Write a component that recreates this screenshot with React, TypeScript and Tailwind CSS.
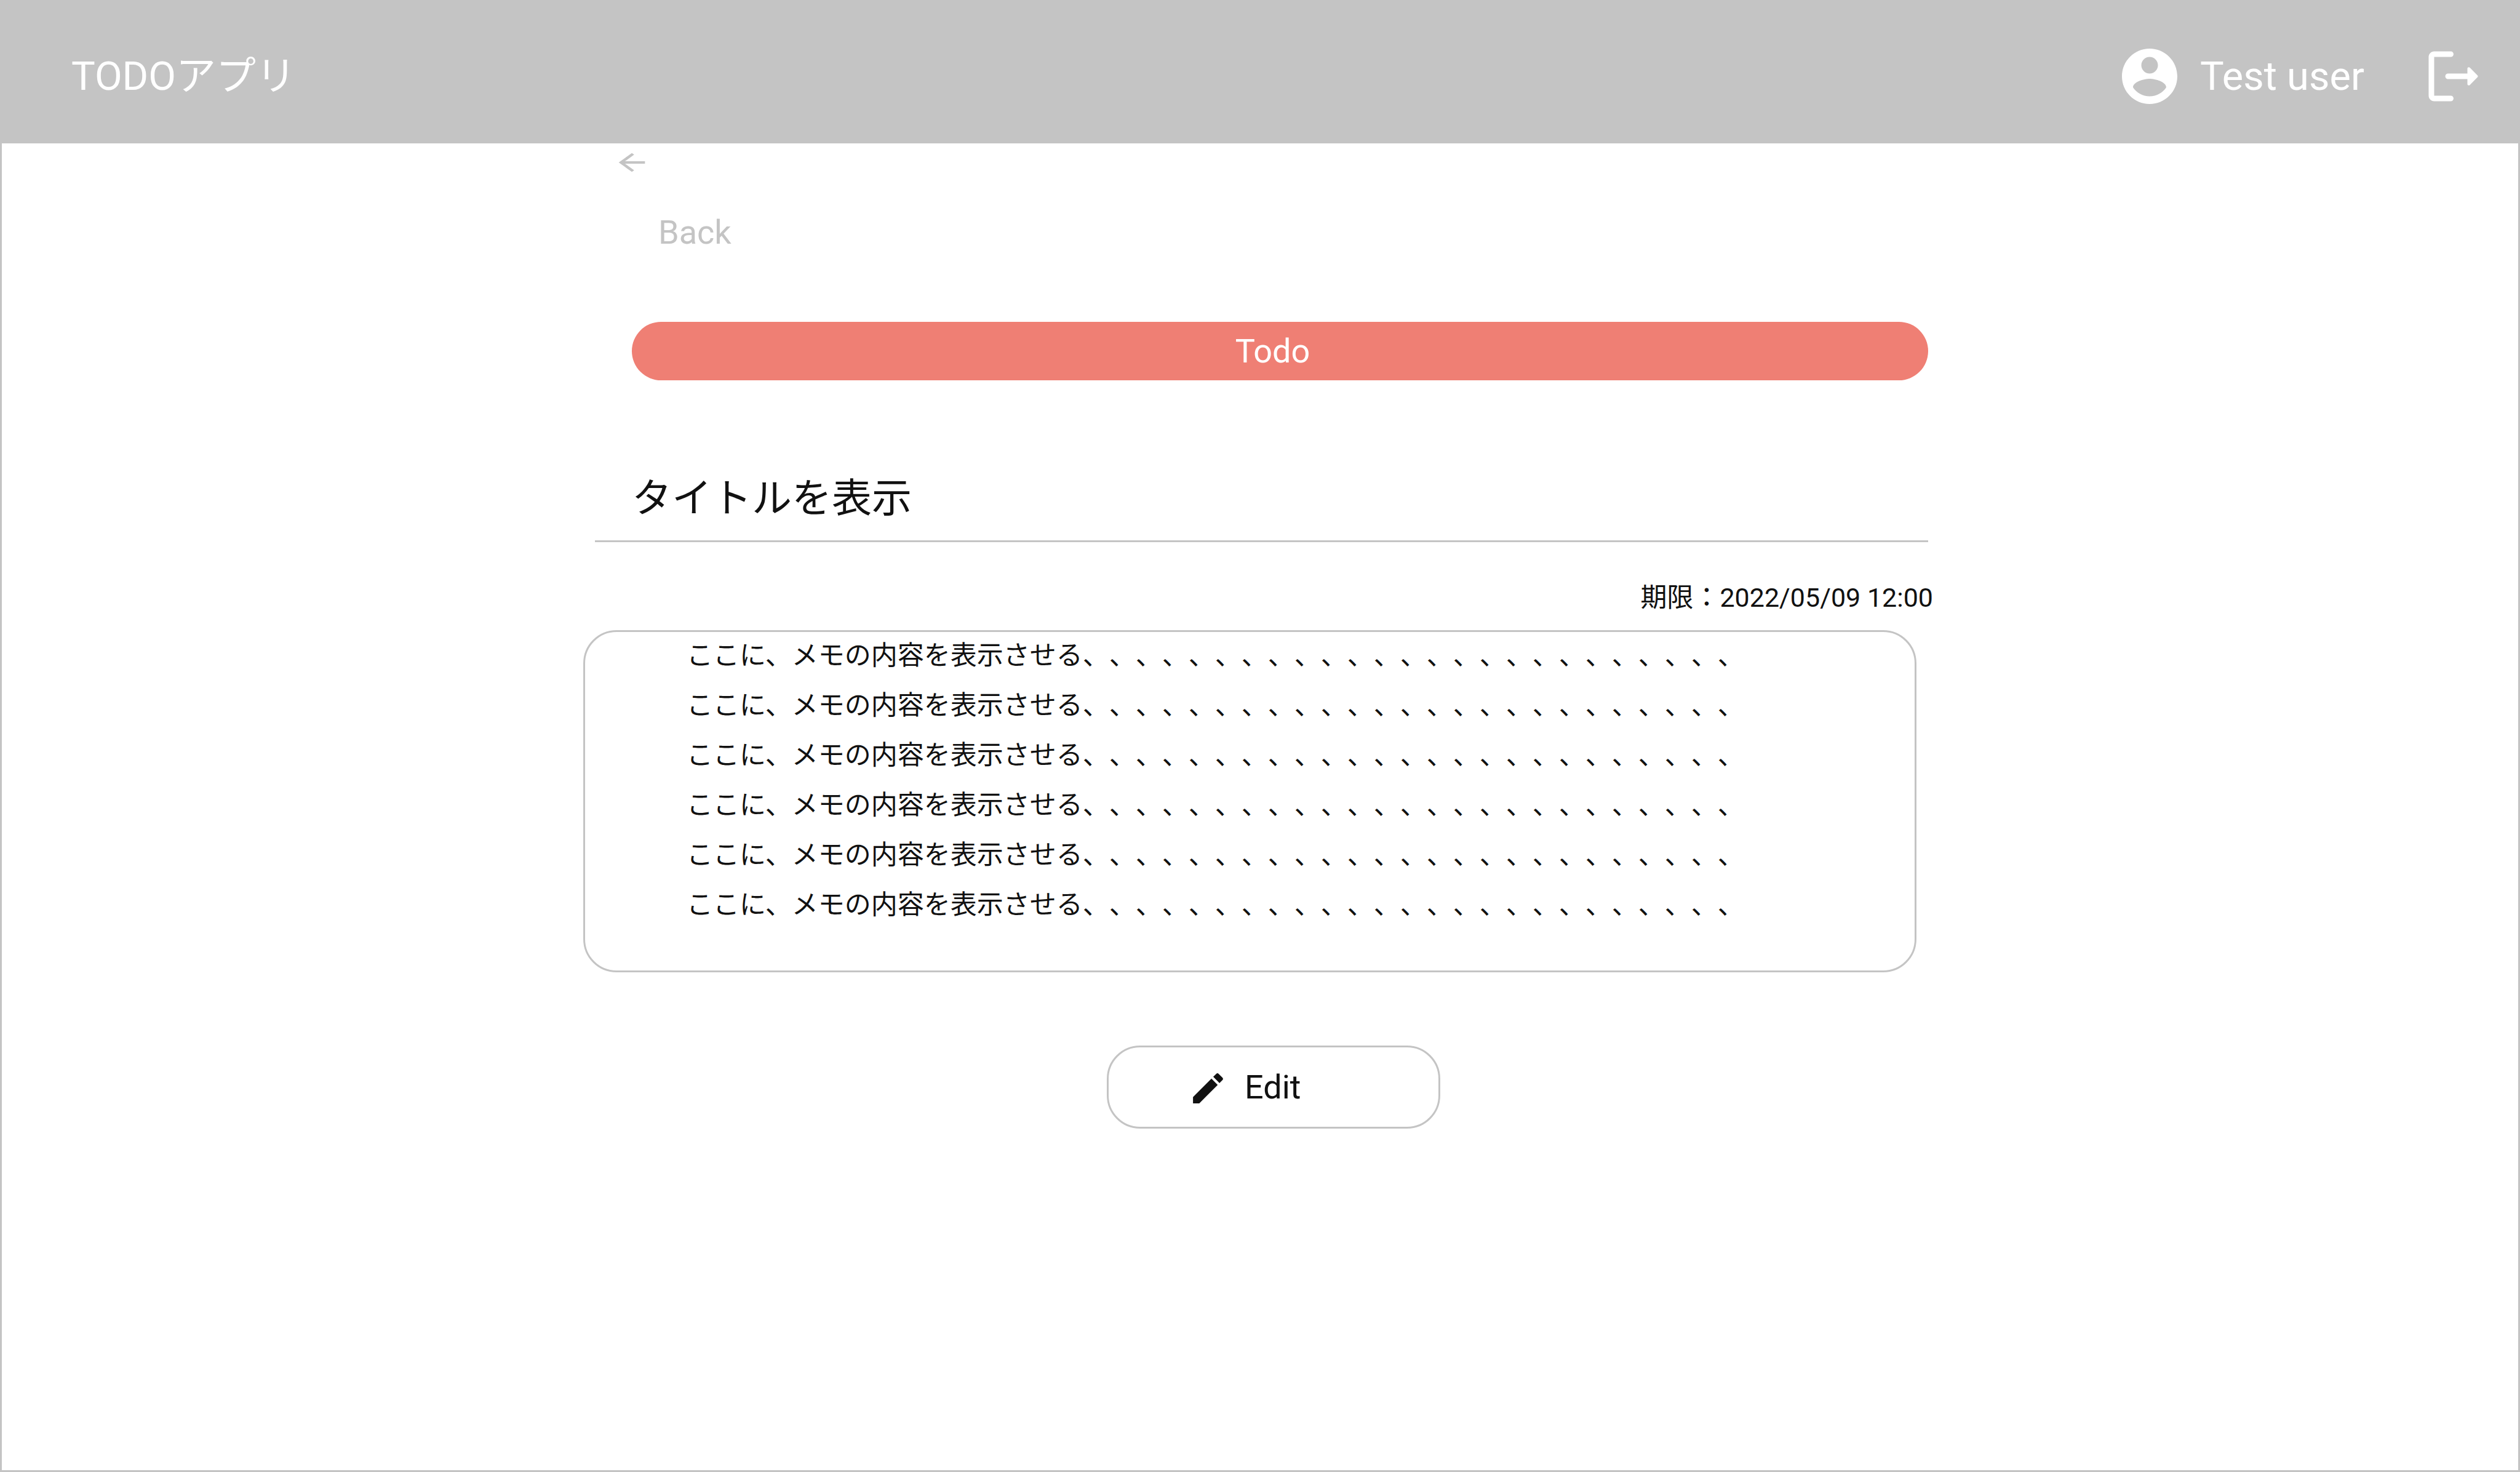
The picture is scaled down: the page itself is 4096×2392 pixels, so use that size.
import React from "react";

type IconProps = { className?: string };

function AccountCircleIcon({ className }: IconProps) {
  return (
    <svg viewBox="0 0 24 24" fill="currentColor" aria-hidden="true" className={className}>
      <path d="M12 2C6.48 2 2 6.48 2 12s4.48 10 10 10 10-4.48 10-10S17.52 2 12 2zm0 3c1.66 0 3 1.34 3 3s-1.34 3-3 3-3-1.34-3-3 1.34-3 3-3zm0 14.2c-2.5 0-4.71-1.28-6-3.22.03-1.99 4-3.08 6-3.08 1.99 0 5.97 1.09 6 3.08-1.29 1.94-3.5 3.22-6 3.22z" />
    </svg>
  );
}

function LogoutIcon({ className }: IconProps) {
  return (
    <svg viewBox="0 0 24 24" fill="currentColor" aria-hidden="true" className={className}>
      <path d="M5 5h6c.55 0 1-.45 1-1s-.45-1-1-1H5c-1.1 0-2 .9-2 2v14c0 1.1.9 2 2 2h6c.55 0 1-.45 1-1s-.45-1-1-1H5V5z" />
      <path d="m20.65 11.65-2.79-2.79c-.32-.32-.86-.1-.86.35V11h-7c-.55 0-1 .45-1 1s.45 1 1 1h7v1.79c0 .45.54.67.85.35l2.79-2.79c.2-.19.2-.51.01-.7z" />
    </svg>
  );
}

function ArrowBackIcon({ className }: IconProps) {
  return (
    <svg
      viewBox="0 0 24 24"
      preserveAspectRatio="none"
      fill="currentColor"
      aria-hidden="true"
      className={className}
    >
      <path d="M20 11H7.83l5.59-5.59L12 4l-8 8 8 8 1.41-1.41L7.83 13H20v-2z" />
    </svg>
  );
}

function EditIcon({ className }: IconProps) {
  return (
    <svg viewBox="0 0 24 24" fill="currentColor" aria-hidden="true" className={className}>
      <path d="M3 17.25V21h3.75L17.81 9.94l-3.75-3.75L3 17.25zM20.71 7.04c.39-.39.39-1.02 0-1.41l-2.34-2.34c-.39-.39-1.02-.39-1.41 0l-1.83 1.83 3.75 3.75 1.83-1.83z" />
    </svg>
  );
}

const memoLine = "ここに、メモの内容を表示させる" + "、".repeat(25);
const memo = Array.from({ length: 6 }, () => memoLine);

function Header() {
  return (
    <header className="flex items-center justify-between bg-[#c4c4c4] pt-[67px] pr-[51px] pb-[55px] pl-[113px] text-[65px] leading-[76px] text-white">
      <p>TODOアプリ</p>
      <div className="flex items-center gap-[91px]">
        <div className="flex items-center gap-7">
          <AccountCircleIcon className="size-[108px]" />
          <span>Test user</span>
        </div>
        <button type="button" aria-label="Log out">
          <LogoutIcon className="size-[108px]" />
        </button>
      </div>
    </header>
  );
}

export default function App() {
  return (
    <div
      lang="ja"
      className="min-h-screen border-3 border-[#c4c4c4] bg-white font-['Roboto','Noto_Sans_CJK_JP',sans-serif] text-[#111111] [text-spacing-trim:space-all]"
    >
      <Header />
      <main className="mx-auto w-full max-w-[2200px] pt-2">
        <a
          href="#back"
          className="ml-[47px] inline-flex flex-col items-start gap-[59px] align-top text-[54px] leading-[63px] text-[#c4c4c4]"
        >
          <ArrowBackIcon className="h-[46px] w-[64px]" />
          <span className="pl-[75px]">Back</span>
        </a>

        <p className="mt-[114px] mr-[14px] ml-[79px] rounded-full bg-[#ef7f74] py-4 pr-6 text-center text-[54px] leading-[63px] text-white">
          Todo
        </p>

        <h1 className="mt-[154px] mr-[14px] ml-[19px] border-b-3 border-[#c4c4c4] pb-[30px] pl-[60px] text-[65px] leading-[76px]">
          タイトルを表示
        </h1>

        <p className="mt-[65px] mr-[6px] text-right text-[43px] leading-[50px]">
          期限：2022/05/09 12:00
        </p>

        <section
          aria-label="メモ"
          className="mt-7 mr-[33px] flex flex-col gap-[31px] rounded-[54px] border-3 border-[#c4c4c4] pt-[13px] pb-[82px] pl-[165px] text-[43px] leading-[50px] whitespace-nowrap"
        >
          {memo.map((line, i) => (
            <p key={i}>{line}</p>
          ))}
        </section>

        <div className="mt-[119px] flex justify-center pl-11">
          <button
            type="button"
            className="flex w-[542px] items-center gap-[27px] rounded-[54px] border-3 border-[#c4c4c4] py-[30px] pl-[129px] text-[54px] leading-[63px]"
          >
            <EditIcon className="mt-1 size-[65px]" />
            <span>Edit</span>
          </button>
        </div>
      </main>
    </div>
  );
}
